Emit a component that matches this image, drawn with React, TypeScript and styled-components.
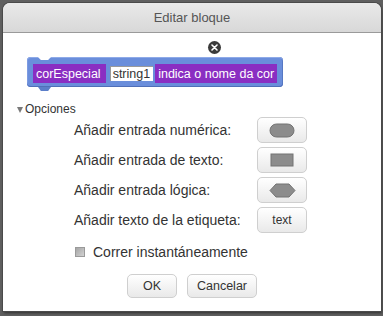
import React from "react";
import styled, { createGlobalStyle } from "styled-components";

const Global = createGlobalStyle`
  html, body { margin: 0; padding: 0; }
  body {
    width: 383px;
    height: 316px;
    overflow: hidden;
    background: #5f5f5f;
    font-family: "Liberation Sans", Arial, sans-serif;
  }
  #root { padding: 3px 0 0 3px; }
`;

const Dialog = styled.div`
  width: 378px;
  height: 308px;
  background: #ffffff;
  border-radius: 7px 7px 0 0;
  box-shadow: 0 0 0 1px #4a4a4a, 1px 2px 3px rgba(0, 0, 0, 0.5);
  display: flex;
  flex-direction: column;
  overflow: hidden;
`;

const Header = styled.div`
  height: 29px;
  flex: none;
  border-bottom: 1px solid #9a9a9a;
  background: linear-gradient(to bottom, #e9e9e9, #d8d8d8);
  display: flex;
  align-items: center;
  justify-content: center;
  color: #555555;
  font-size: 13px;
`;

const Body = styled.div`
  display: flex;
  flex-direction: column;
  flex: 1;
`;

const BlockArea = styled.div`
  position: relative;
  padding: 24px 0 0 24px;
  display: flex;
`;

const CloseButton = styled.div`
  position: absolute;
  left: 205px;
  top: 8px;
  width: 13px;
  height: 13px;
  border-radius: 50%;
  background: #3a3a3a;
  display: flex;
  align-items: center;
  justify-content: center;
`;

const Block = styled.div`
  position: relative;
  display: inline-flex;
  align-items: center;
  height: 30px;
  box-sizing: border-box;
  padding: 3px 6px 0 6px;
  background: #6a8edb;
  border-radius: 4px;
  box-shadow: inset 0 1px 0 #8eaae8, inset 0 -1px 0 #4f6fb8, inset 1px 0 0 #7d9be2,
    inset -1px 0 0 #5678c4;

  &::before {
    content: "";
    position: absolute;
    left: 11px;
    top: 0;
    width: 13px;
    height: 3px;
    background: #ffffff;
    clip-path: polygon(0 0, 100% 0, 78% 100%, 22% 100%);
  }
  &::after {
    content: "";
    position: absolute;
    left: 11px;
    bottom: -4px;
    width: 13px;
    height: 4px;
    background: #5b7ec9;
    clip-path: polygon(0 0, 100% 0, 78% 100%, 22% 100%);
  }
`;

const Label = styled.span<{ $trail?: number }>`
  display: inline-flex;
  align-items: center;
  height: 19px;
  padding: 0 ${(p) => 3 + (p.$trail ?? 0)}px 0 3px;
  background: #8a2ec2;
  color: #ffffff;
  font-size: 12.5px;
  white-space: pre;
`;

const Input = styled.span`
  display: inline-flex;
  align-items: center;
  height: 15px;
  padding: 0 3px;
  margin: 0 2px 0 4px;
  background: #ffffff;
  color: #333333;
  font-size: 12.5px;
  box-shadow: inset 1px 1px 0 #9a9a9a;
`;

const OptionsHeader = styled.div`
  margin: 15px 0 0 14px;
  display: flex;
  align-items: center;
  gap: 2px;
  height: 14px;
  font-size: 12px;
  color: #333333;
`;

const Triangle = styled.span`
  width: 0;
  height: 0;
  border-left: 3.5px solid transparent;
  border-right: 3.5px solid transparent;
  border-top: 6px solid #7a7a7a;
  margin-top: 1px;
`;

const OptionsGrid = styled.div`
  margin: 1px 0 0 71px;
  display: grid;
  grid-template-columns: 183px 50px;
  grid-auto-rows: 26px;
  row-gap: 4px;
  align-items: center;
`;

const RowLabel = styled.div`
  font-size: 14px;
  color: #333333;
`;

const Button = styled.button`
  box-sizing: border-box;
  height: 26px;
  min-width: 50px;
  padding: 0 9px;
  border: 1px solid #cfcfcf;
  border-radius: 5px;
  background: linear-gradient(to bottom, #ffffff, #e9e9e9);
  color: #333333;
  font-family: "Liberation Sans", Arial, sans-serif;
  font-size: 12px;
  display: flex;
  align-items: center;
  justify-content: center;
  cursor: pointer;
`;

const CheckRow = styled.label`
  margin: 11px 0 0 72px;
  display: flex;
  align-items: center;
  gap: 8px;
  height: 16px;
  font-size: 14px;
  color: #333333;
`;

const CheckBox = styled.span`
  width: 10px;
  height: 10px;
  box-sizing: border-box;
  border: 1px solid #9a9a9a;
  background: linear-gradient(135deg, #a5a5a5, #d2d2d2);
`;

const Footer = styled.div`
  margin-top: 14px;
  display: flex;
  justify-content: center;
  gap: 10px;
`;

const FooterButton = styled(Button)`
  height: 24px;
  font-size: 12.5px;
`;

const ShapeIcon = ({ kind }: { kind: "num" | "text" | "bool" }) => {
  if (kind === "num")
    return (
      <svg width="26" height="15" viewBox="0 0 26 15">
        <rect x="1" y="1" width="24" height="13" rx="6.5" fill="#8c8c8c" stroke="#737373" />
      </svg>
    );
  if (kind === "text")
    return (
      <svg width="24" height="14" viewBox="0 0 24 14">
        <rect x="1" y="1" width="22" height="12" fill="#8c8c8c" stroke="#737373" />
      </svg>
    );
  return (
    <svg width="27" height="15" viewBox="0 0 27 15">
      <polygon points="1,7.5 7,1 20,1 26,7.5 20,14 7,14" fill="#8c8c8c" stroke="#737373" />
    </svg>
  );
};

export default function App() {
  return (
    <>
      <Global />
      <Dialog>
        <Header>Editar bloque</Header>
        <Body>
          <BlockArea>
            <CloseButton>
              <svg width="7" height="7" viewBox="0 0 7 7">
                <path d="M1 1 L6 6 M6 1 L1 6" stroke="#ffffff" strokeWidth="1.6" strokeLinecap="round" />
              </svg>
            </CloseButton>
            <Block>
              <Label $trail={2}>corEspecial</Label>
              <Input>string1</Input>
              <Label>indica o nome da cor</Label>
            </Block>
          </BlockArea>
          <OptionsHeader>
            <Triangle />
            Opciones
          </OptionsHeader>
          <OptionsGrid>
            <RowLabel>Añadir entrada numérica:</RowLabel>
            <Button>
              <ShapeIcon kind="num" />
            </Button>
            <RowLabel>Añadir entrada de texto:</RowLabel>
            <Button>
              <ShapeIcon kind="text" />
            </Button>
            <RowLabel>Añadir entrada lógica:</RowLabel>
            <Button>
              <ShapeIcon kind="bool" />
            </Button>
            <RowLabel>Añadir texto de la etiqueta:</RowLabel>
            <Button>text</Button>
          </OptionsGrid>
          <CheckRow>
            <CheckBox />
            Correr instantáneamente
          </CheckRow>
          <Footer>
            <FooterButton>OK</FooterButton>
            <FooterButton>Cancelar</FooterButton>
          </Footer>
        </Body>
      </Dialog>
    </>
  );
}
